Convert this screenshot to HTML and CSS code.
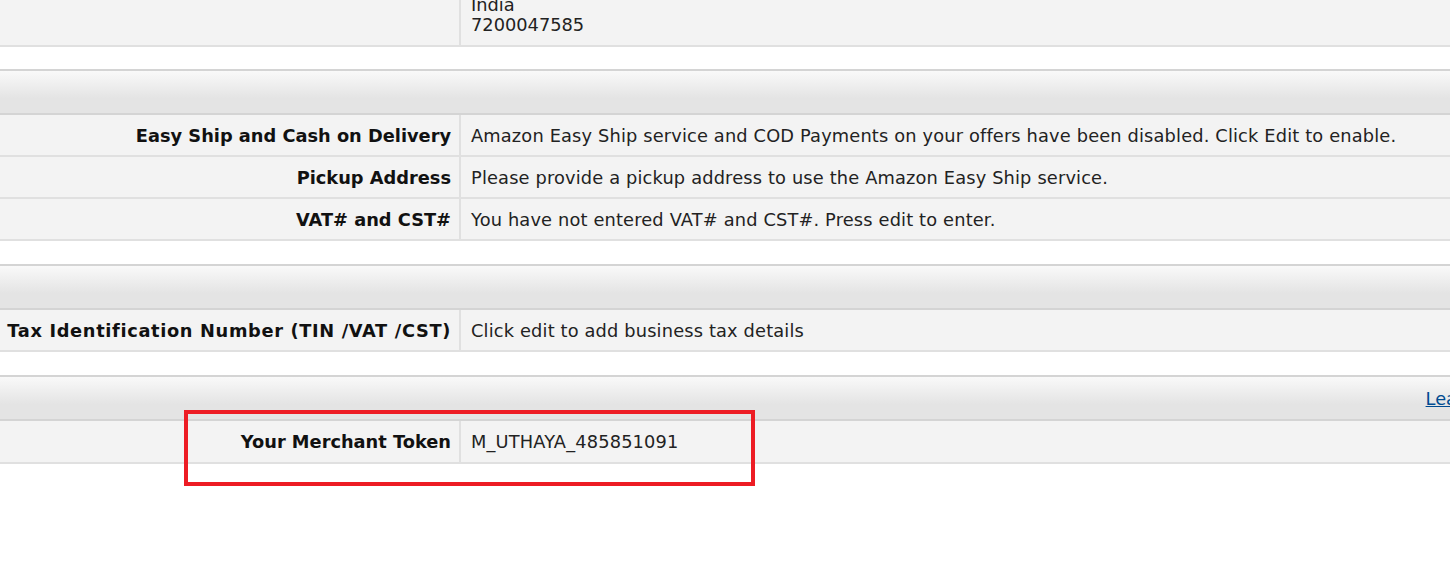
FILE: index.html
```html
<!DOCTYPE html>
<html lang="en">
<head>
<meta charset="utf-8">
<title>Seller Account Information</title>
<link rel="stylesheet" href="styles.css">
</head>
<body>
<div class="page">
  <div class="sheet">
    <div class="row row-top">
      <div class="label"></div>
      <div class="value multi"><span>India</span><span>7200047585</span></div>
    </div>

    <div class="section section-first">
      <div class="sec-head"></div>
      <div class="row">
        <div class="label">Easy Ship and Cash on Delivery</div>
        <div class="value">Amazon Easy Ship service and COD Payments on your offers have been disabled. Click Edit to enable.</div>
      </div>
      <div class="row">
        <div class="label">Pickup Address</div>
        <div class="value">Please provide a pickup address to use the Amazon Easy Ship service.</div>
      </div>
      <div class="row">
        <div class="label">VAT# and CST#</div>
        <div class="value">You have not entered VAT# and CST#. Press edit to enter.</div>
      </div>
    </div>

    <div class="section">
      <div class="sec-head"></div>
      <div class="row">
        <div class="label label-wide">Tax Identification Number (TIN /VAT /CST)</div>
        <div class="value">Click edit to add business tax details</div>
      </div>
    </div>

    <div class="section">
      <div class="sec-head"><a class="learn" href="#">Learn more</a></div>
      <div class="row row-tall">
        <div class="label">Your Merchant Token</div>
        <div class="value">M_UTHAYA_485851091</div>
      </div>
    </div>
  </div>
  <div class="highlight"></div>
</div>
</body>
</html>
```

FILE: styles.css
```css
html, body {
  margin: 0;
  padding: 0;
  overflow: hidden;
  background: #ffffff;
}

body {
  font-family: "DejaVu Sans", Verdana, sans-serif;
  font-size: 17.8px;
  color: #222222;
}

.page {
  position: relative;
  width: 1450px;
  height: 566px;
  overflow: hidden;
}

.sheet {
  width: 1537px;
}

.row {
  display: grid;
  grid-template-columns: 461px 1fr;
  background: #f3f3f3;
  border-bottom: 2px solid #e0e0e0;
}

.row-top {
  margin-top: -15px;
}

.label {
  min-height: 40px;
  display: flex;
  align-items: center;
  justify-content: flex-end;
  padding-right: 8px;
  box-sizing: border-box;
  font-weight: bold;
  color: #111111;
  border-right: 2px solid #e0e0e0;
  white-space: nowrap;
}

.label-wide {
  letter-spacing: 0.66px;
}

.value {
  min-height: 40px;
  display: flex;
  align-items: center;
  padding-left: 10px;
  white-space: nowrap;
  color: #222222;
  letter-spacing: 0.16px;
}

.row-tall .label,
.row-tall .value {
  min-height: 41px;
}

.value.multi {
  flex-direction: column;
  align-items: flex-start;
  justify-content: flex-end;
  line-height: 20px;
  padding-top: 10px;
  padding-bottom: 10px;
  letter-spacing: 0;
}

.section {
  margin-top: 23px;
}

.section-first {
  margin-top: 22px;
}

.sec-head {
  height: 42px;
  border-top: 2px solid #d4d4d4;
  border-bottom: 2px solid #d4d4d4;
  background: linear-gradient(#f9f9f9 0%, #ececec 40%, #e4e4e4 65%, #e4e4e4 100%);
  display: flex;
  align-items: center;
  justify-content: flex-end;
  padding-right: 10px;
}

.learn {
  color: #004b91;
  text-decoration: underline;
  letter-spacing: 0;
}

.highlight {
  position: absolute;
  left: 184px;
  top: 410px;
  width: 571px;
  height: 76px;
  box-sizing: border-box;
  border: 4px solid #ed1c24;
}
```
